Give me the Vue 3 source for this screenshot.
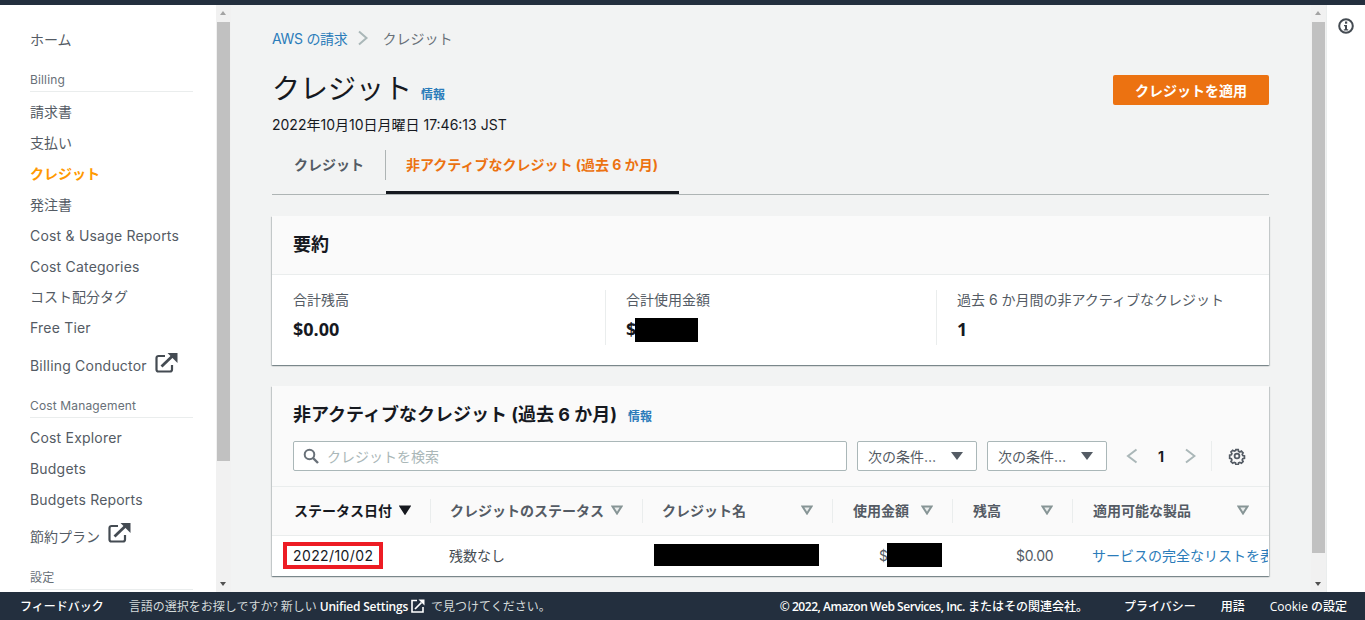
<template>
  <div class="page">
    <div class="top-bar"></div>
    <div class="body-row">
      <nav class="side-nav">
        <template v-for="item in navItems" :key="item.label">
          <div v-if="item.section" class="nav-section">{{ item.label }}</div>
          <a v-else class="nav-item" :class="{ active: item.active, ext: item.ext, home: item.home, latin: isLatin(item.label) }">
            {{ item.label }}
            <svg v-if="item.ext" class="ext-icon" width="23" height="21" viewBox="0 0 23 21">
              <path d="M10 4H3.500A2 2 0 0 0 1.500 6v11.500a2 2 0 0 0 2 2H15a2 2 0 0 0 2-2V13" fill="none" stroke="#444b52" stroke-width="2.200"/>
              <path d="M6.500 14.500 18 3.500" fill="none" stroke="#444b52" stroke-width="2.800"/>
              <path d="M12.500 1h10v10z" fill="#444b52"/>
            </svg>
          </a>
        </template>
      </nav>
      <div class="scrollbar">
        <span class="arrow up"></span>
        <div class="thumb thumb-nav"></div>
        <span class="arrow down"></span>
      </div>

      <main class="content">
        <div class="breadcrumb">
          <a class="link crumb">AWS の請求</a>
          <svg width="12" height="16" viewBox="0 0 12 16"><path d="M2 1.500 9.500 8 2 14.500" fill="none" stroke="#aab7b8" stroke-width="2"/></svg>
          <span class="crumb-current">クレジット</span>
        </div>

        <div class="title-row">
          <div class="title-left">
            <h1>クレジット</h1>
            <a class="link info">情報</a>
          </div>
          <button class="primary">クレジットを適用</button>
        </div>
        <div class="timestamp">2022年10月10日月曜日 17:46:13 JST</div>

        <div class="tabs">
          <div class="tab">クレジット</div>
          <div class="tab active">非アクティブなクレジット (過去 6 か月)</div>
        </div>

        <section class="card summary">
          <h2 class="card-head">要約</h2>
          <div class="stats">
            <div v-for="s in stats" :key="s.label" class="stat">
              <div class="stat-label">{{ s.label }}</div>
              <div class="stat-value">{{ s.value }}<span v-if="s.hidden" class="redact stat-redact"></span></div>
            </div>
          </div>
        </section>

        <section class="card credits">
          <div class="credits-head">
            <h2>非アクティブなクレジット (過去 6 か月)<a class="link info">情報</a></h2>
            <div class="toolbar">
              <div class="search">
                <svg width="16" height="16" viewBox="0 0 16 16"><circle cx="6.500" cy="6.500" r="4.800" fill="none" stroke="#687078" stroke-width="2"/><path d="M10 10l5 5" stroke="#687078" stroke-width="2.400"/></svg>
                <span>クレジットを検索</span>
              </div>
              <div v-for="n in 2" :key="n" class="select">次の条件…<i class="caret"></i></div>
              <div class="pager">
                <svg width="12" height="16" viewBox="0 0 12 16"><path d="M10.500 1.500 2 8 10.500 14.500" fill="none" stroke="#aab7b8" stroke-width="2"/></svg>
                <b>1</b>
                <svg width="12" height="16" viewBox="0 0 12 16"><path d="M2 1.500 10.500 8 2 14.500" fill="none" stroke="#aab7b8" stroke-width="2"/></svg>
              </div>
              <div class="settings">
                <svg width="18" height="18" viewBox="0 0 18 18">
                  <path d="M7.600 1.500h2.800l.4 2 1.500.7 1.800-1 2 2-1 1.800.6 1.500 2 .4v2.800l-2 .4-.6 1.500 1 1.800-2 2-1.800-1-1.500.6-.4 2H7.600l-.4-2-1.500-.6-1.800 1-2-2 1-1.800-.6-1.500-2-.4V7.900l2-.4.6-1.500-1-1.800 2-2 1.800 1 1.500-.7z" transform="translate(1.400 1.400) scale(.85)" fill="none" stroke="#545b64" stroke-width="2"/>
                  <circle cx="9" cy="9" r="2.400" fill="none" stroke="#545b64" stroke-width="1.800"/>
                </svg>
              </div>
            </div>
          </div>

          <div class="table-wrap">
            <div class="grid thead">
              <div v-for="(c, i) in columns" :key="c" class="th" :class="{ sorted: i === 0 }">
                <span>{{ c }}</span>
                <svg class="sort" width="12" height="10" viewBox="0 0 12 10">
                  <path d="M1.500 1.500h9L6 8.500z" :fill="i === 0 ? '#16191f' : '#eaeded'" :stroke="i === 0 ? '#16191f' : '#879596'" stroke-width="2"/>
                </svg>
              </div>
            </div>
            <div class="grid tbody">
              <div class="td date"><span class="marked">2022/10/02</span></div>
              <div class="td status">残数なし</div>
              <div class="td"><span class="redact name-redact"></span></div>
              <div class="td amount">$<span class="redact amount-redact"></span></div>
              <div class="td balance">$0.00</div>
              <div class="td product"><a class="link">サービスの完全なリストを表示</a></div>
            </div>
          </div>
        </section>
      </main>
      <div class="scrollbar">
        <span class="arrow up"></span>
        <div class="thumb thumb-main"></div>
        <span class="arrow down"></span>
      </div>

      <aside class="tools">
        <svg width="16" height="16" viewBox="0 0 16 16">
          <circle cx="8" cy="8" r="6.800" fill="none" stroke="#444b52" stroke-width="2"/>
          <rect x="7" y="3.500" width="2.200" height="2.200" fill="#444b52"/>
          <path d="M6 7h3v4.200h1.200v1.300H5.800v-1.300H7V8.200H6z" fill="#444b52"/>
        </svg>
      </aside>
    </div>

    <footer class="footer">
      <span class="feedback">フィードバック</span>
      <span class="lang">言語の選択をお探しですか? 新しい <b>Unified Settings</b>
        <svg class="foot-ext" width="14" height="14" viewBox="0 0 14 14"><path d="M6 1.500H1v11.500h11V8" fill="none" stroke="#fff" stroke-width="1.600"/><path d="M4 10l6.500-6.500" stroke="#fff" stroke-width="1.700"/><path d="M7.500 .5h6v6z" fill="#fff"/></svg>
        で見つけてください。</span>
      <span class="spacer"></span>
      <span class="copy"><span class="copy-en">© 2022, Amazon Web Services, Inc.</span> またはその関連会社。</span>
      <span class="foot-link privacy">プライバシー</span>
      <span class="foot-link terms">用語</span>
      <span class="foot-link cookie">Cookie の設定</span>
    </footer>
  </div>
</template>

<script setup>
const navItems = [
  { label: 'ホーム', home: true },
  { label: 'Billing', section: true },
  { label: '請求書' },
  { label: '支払い' },
  { label: 'クレジット', active: true },
  { label: '発注書' },
  { label: 'Cost & Usage Reports' },
  { label: 'Cost Categories' },
  { label: 'コスト配分タグ' },
  { label: 'Free Tier' },
  { label: 'Billing Conductor', ext: true },
  { label: 'Cost Management', section: true },
  { label: 'Cost Explorer' },
  { label: 'Budgets' },
  { label: 'Budgets Reports' },
  { label: '節約プラン', ext: true },
  { label: '設定', section: true }
]

const stats = [
  { label: '合計残高', value: '$0.00' },
  { label: '合計使用金額', value: '$', hidden: true },
  { label: '過去 6 か月間の非アクティブなクレジット', value: '1' }
]

const columns = ['ステータス日付', 'クレジットのステータス', 'クレジット名', '使用金額', '残高', '適用可能な製品']

const isLatin = (s) => /^[\x20-\x7e]+$/.test(s)
</script>

<style>
html, body {
  margin: 0;
  height: 100%;
  overflow: hidden;
}
</style>

<style scoped>
.page {
  width: 1365px;
  height: 620px;
  display: flex;
  flex-direction: column;
  overflow: hidden;
  font-family: Inter, "Noto Sans CJK JP", sans-serif;
  font-size: 14px;
  color: #16191f;
  background: #fff;
}

.top-bar {
  height: 5px;
  flex: none;
  background: #232f3e;
}

.body-row {
  flex: 1;
  min-height: 0;
  display: flex;
}

.side-nav {
  width: 216px;
  flex: none;
  box-sizing: border-box;
  padding: 18px 23px 0 30px;
  background: #fff;
  overflow: hidden;
}

.nav-item {
  display: flex;
  align-items: center;
  box-sizing: border-box;
  height: 30.8px;
  color: #545b64;
  white-space: nowrap;
}

.nav-item.latin {
  padding-top: 2px;
  letter-spacing: 0.2px;
}

.nav-item.home {
  height: 32px;
  margin-bottom: 14px;
}

.nav-item.active {
  color: #ff9900;
  font-weight: 700;
}

.nav-item.ext {
  height: 44px;
  margin-bottom: 2px;
}

.ext-icon {
  margin: -6px 0 0 8px;
}

.nav-section {
  height: 22px;
  line-height: 22px;
  margin: 8px 0 4px;
  border-bottom: 1px solid #eaeded;
  font-size: 12px;
  letter-spacing: 0.15px;
  color: #687078;
}

.ext + .nav-section {
  margin: 9px 0 3px;
}

.scrollbar {
  width: 15px;
  flex: none;
  position: relative;
  background: #f1f1f1;
}

.thumb {
  position: absolute;
  left: 1px;
  right: 1px;
  top: 17px;
  background: #c1c1c1;
}

.thumb-nav {
  height: 439px;
}

.thumb-main {
  height: 531px;
}

.arrow {
  position: absolute;
  left: 4px;
  width: 0;
  height: 0;
  border-left: 3.5px solid transparent;
  border-right: 3.5px solid transparent;
}

.arrow.up {
  top: 6px;
  border-bottom: 4px solid #a3a3a3;
}

.arrow.down {
  bottom: 6px;
  border-top: 4px solid #505050;
}

.content {
  flex: 1;
  min-width: 0;
  box-sizing: border-box;
  padding: 0 42px 0 41px;
  background: #f2f3f3;
  overflow: hidden;
}

.link {
  color: #2b7cba;
}

.breadcrumb {
  display: flex;
  align-items: center;
  gap: 10px;
  height: 20px;
  margin-top: 23px;
  color: #687078;
}

.crumb {
  letter-spacing: -0.3px;
}

.crumb-current {
  margin-left: 3px;
}

.title-row {
  display: flex;
  justify-content: space-between;
  align-items: flex-start;
  margin-top: 20px;
}

.title-left {
  display: flex;
  align-items: baseline;
}

h1 {
  margin: 0;
  font-size: 28px;
  font-weight: 400;
  line-height: 42px;
  color: #16191f;
}

.info {
  font-size: 12px;
  font-weight: 700;
  margin-left: 9px;
}

.primary {
  width: 156px;
  height: 30px;
  margin-top: 7px;
  border: 0;
  border-radius: 2px;
  background: #ec7211;
  color: #fff;
  font: 700 14px Inter, "Noto Sans CJK JP", sans-serif;
}

.timestamp {
  margin-top: 5px;
  line-height: 20px;
  color: #16191f;
}

.tabs {
  display: flex;
  height: 45px;
  margin-top: 15px;
  box-sizing: border-box;
  border-bottom: 1px solid #aeb4b4;
}

.tab {
  position: relative;
  height: 44px;
  box-sizing: border-box;
  padding: 5px 22px 0 22px;
  line-height: 20px;
  font-weight: 700;
  color: #545b64;
}

.tab:first-child::after {
  content: "";
  position: absolute;
  right: 0;
  top: 0;
  height: 30px;
  border-right: 1px solid #aeb4b4;
}

.tab.active {
  width: 293px;
  padding-left: 20px;
  padding-right: 0;
  color: #ec7211;
  border-bottom: 3px solid #16191f;
  white-space: nowrap;
}

.card {
  background: #fff;
  box-shadow: 0 1px 1px 0 rgba(0, 28, 36, 0.3), 1px 1px 1px 0 rgba(0, 28, 36, 0.15), -1px 1px 1px 0 rgba(0, 28, 36, 0.15);
}

.summary {
  margin-top: 21px;
  height: 149px;
}

.card-head {
  margin: 0;
  height: 59px;
  box-sizing: border-box;
  padding: 0 21px;
  line-height: 57px;
  font-size: 18px;
  font-weight: 700;
  background: #fafafa;
  border-bottom: 1px solid #eaeded;
}

.stats {
  display: grid;
  grid-template-columns: 333px 331px 333px;
  padding-top: 15px;
}

.stat {
  height: 55px;
  padding-left: 20px;
  border-left: 1px solid #eaeded;
}

.stat:first-child {
  padding-left: 21px;
  border-left: 0;
}

.stat-label {
  line-height: 20px;
  color: #545b64;
}

.stat-value {
  display: flex;
  margin-top: 5px;
  font-family: "Open Sans", "Noto Sans CJK JP", sans-serif;
  font-size: 18px;
  font-weight: 700;
  line-height: 28px;
}

.redact {
  display: inline-block;
  background: #000;
}

.stat-redact {
  width: 63px;
  height: 24px;
  margin: 3px 0 0 -1px;
}

.credits {
  margin-top: 21px;
  height: 190px;
}

.credits-head {
  height: 101px;
  box-sizing: border-box;
  padding: 16px 21px 0;
  background: #fafafa;
  border-bottom: 1px solid #eaeded;
}

.credits-head h2 {
  margin: 0;
  font-size: 18px;
  font-weight: 700;
  line-height: 26px;
}

.credits-head h2 .info {
  margin-left: 11px;
}

.toolbar {
  display: flex;
  align-items: center;
  margin-top: 11px;
}

.search {
  width: 554px;
  height: 30px;
  flex: none;
  box-sizing: border-box;
  display: flex;
  align-items: center;
  gap: 8px;
  padding-left: 9px;
  background: #fff;
  border: 1px solid #aab7b8;
  border-radius: 2px;
  color: #aab7b8;
}

.select {
  width: 120px;
  height: 30px;
  flex: none;
  box-sizing: border-box;
  display: flex;
  align-items: center;
  justify-content: space-between;
  margin-left: 10px;
  padding: 0 13px 0 10px;
  background: #fff;
  border: 1px solid #aab7b8;
  border-radius: 2px;
  color: #545b64;
  white-space: nowrap;
}

.caret {
  width: 0;
  height: 0;
  border-left: 6px solid transparent;
  border-right: 6px solid transparent;
  border-top: 8px solid #545b64;
}

.pager {
  display: flex;
  align-items: center;
  gap: 20px;
  margin-left: 19px;
  padding-right: 15px;
  height: 30px;
  border-right: 1px solid #eaeded;
}

.pager b {
  font-size: 14px;
  color: #16191f;
}

.settings {
  display: flex;
  margin-left: 16px;
}

.table-wrap {
  overflow: hidden;
}

.grid {
  display: grid;
  grid-template-columns: 157px 212px 190px 120px 120px 196px;
}

.thead {
  height: 49px;
  background: #fafafa;
  border-bottom: 1px solid #eaeded;
  box-sizing: border-box;
  padding-left: 1px;
}

.th {
  position: relative;
  display: flex;
  align-items: center;
  justify-content: space-between;
  padding: 0 19px 2px 20px;
  font-weight: 700;
  color: #545b64;
  white-space: nowrap;
}

.th:first-child,
.th:nth-child(n + 4) {
  padding-left: 21px;
}

.th.sorted {
  color: #16191f;
}

.th + .th::before {
  content: "";
  position: absolute;
  left: 0;
  top: 12px;
  bottom: 12px;
  border-left: 1px solid #eaeded;
}

.sort {
  flex: none;
}

.tbody {
  height: 40px;
  box-sizing: border-box;
  padding: 0 0 2px 1px;
  align-items: center;
  color: #545b64;
}

.td {
  padding-left: 20px;
  white-space: nowrap;
  display: flex;
  align-items: center;
  min-width: 0;
}

.td.date {
  padding-left: 10px;
}

.td.status {
  padding-left: 19px;
  color: #444b52;
}

.marked {
  display: block;
  width: 100px;
  height: 27px;
  box-sizing: border-box;
  border: 4px solid #ed1c24;
  padding-left: 6px;
  line-height: 19px;
  letter-spacing: 0.4px;
  color: #16191f;
}

.name-redact {
  width: 165px;
  height: 22px;
  margin-left: -8px;
}

.amount {
  padding-left: 47px;
}

.amount-redact {
  width: 55px;
  height: 24px;
  margin-left: -1px;
}

.balance {
  padding-left: 64px;
  letter-spacing: -0.3px;
}

.product {
  overflow: hidden;
}

.tools {
  width: 39px;
  flex: none;
  display: flex;
  justify-content: center;
  align-items: flex-start;
  padding-top: 13px;
  box-sizing: border-box;
  background: #fff;
  border-left: 1px solid #eaeded;
}

.footer {
  height: 28px;
  flex: none;
  display: flex;
  align-items: center;
  background: #232f3e;
  color: #d5dbdb;
  font-family: "Open Sans", "Noto Sans CJK JP", sans-serif;
  font-size: 12px;
  white-space: nowrap;
}

.feedback {
  margin-left: 20px;
  color: #fff;
  font-weight: 500;
}

.lang {
  margin-left: 25px;
  display: flex;
  align-items: center;
  gap: 3px;
}

.lang b {
  color: #fff;
  font-weight: 600;
  letter-spacing: -0.2px;
}

.foot-ext {
  margin-right: 3px;
}

.spacer {
  flex: 1;
}

.copy,
.foot-link {
  color: #fff;
  font-weight: 500;
}

.copy-en {
  font-weight: 600;
  letter-spacing: -0.45px;
}

.privacy {
  margin-left: 36px;
}

.terms {
  margin-left: 25px;
}

.cookie {
  margin-left: 25px;
  margin-right: 18px;
}
</style>
